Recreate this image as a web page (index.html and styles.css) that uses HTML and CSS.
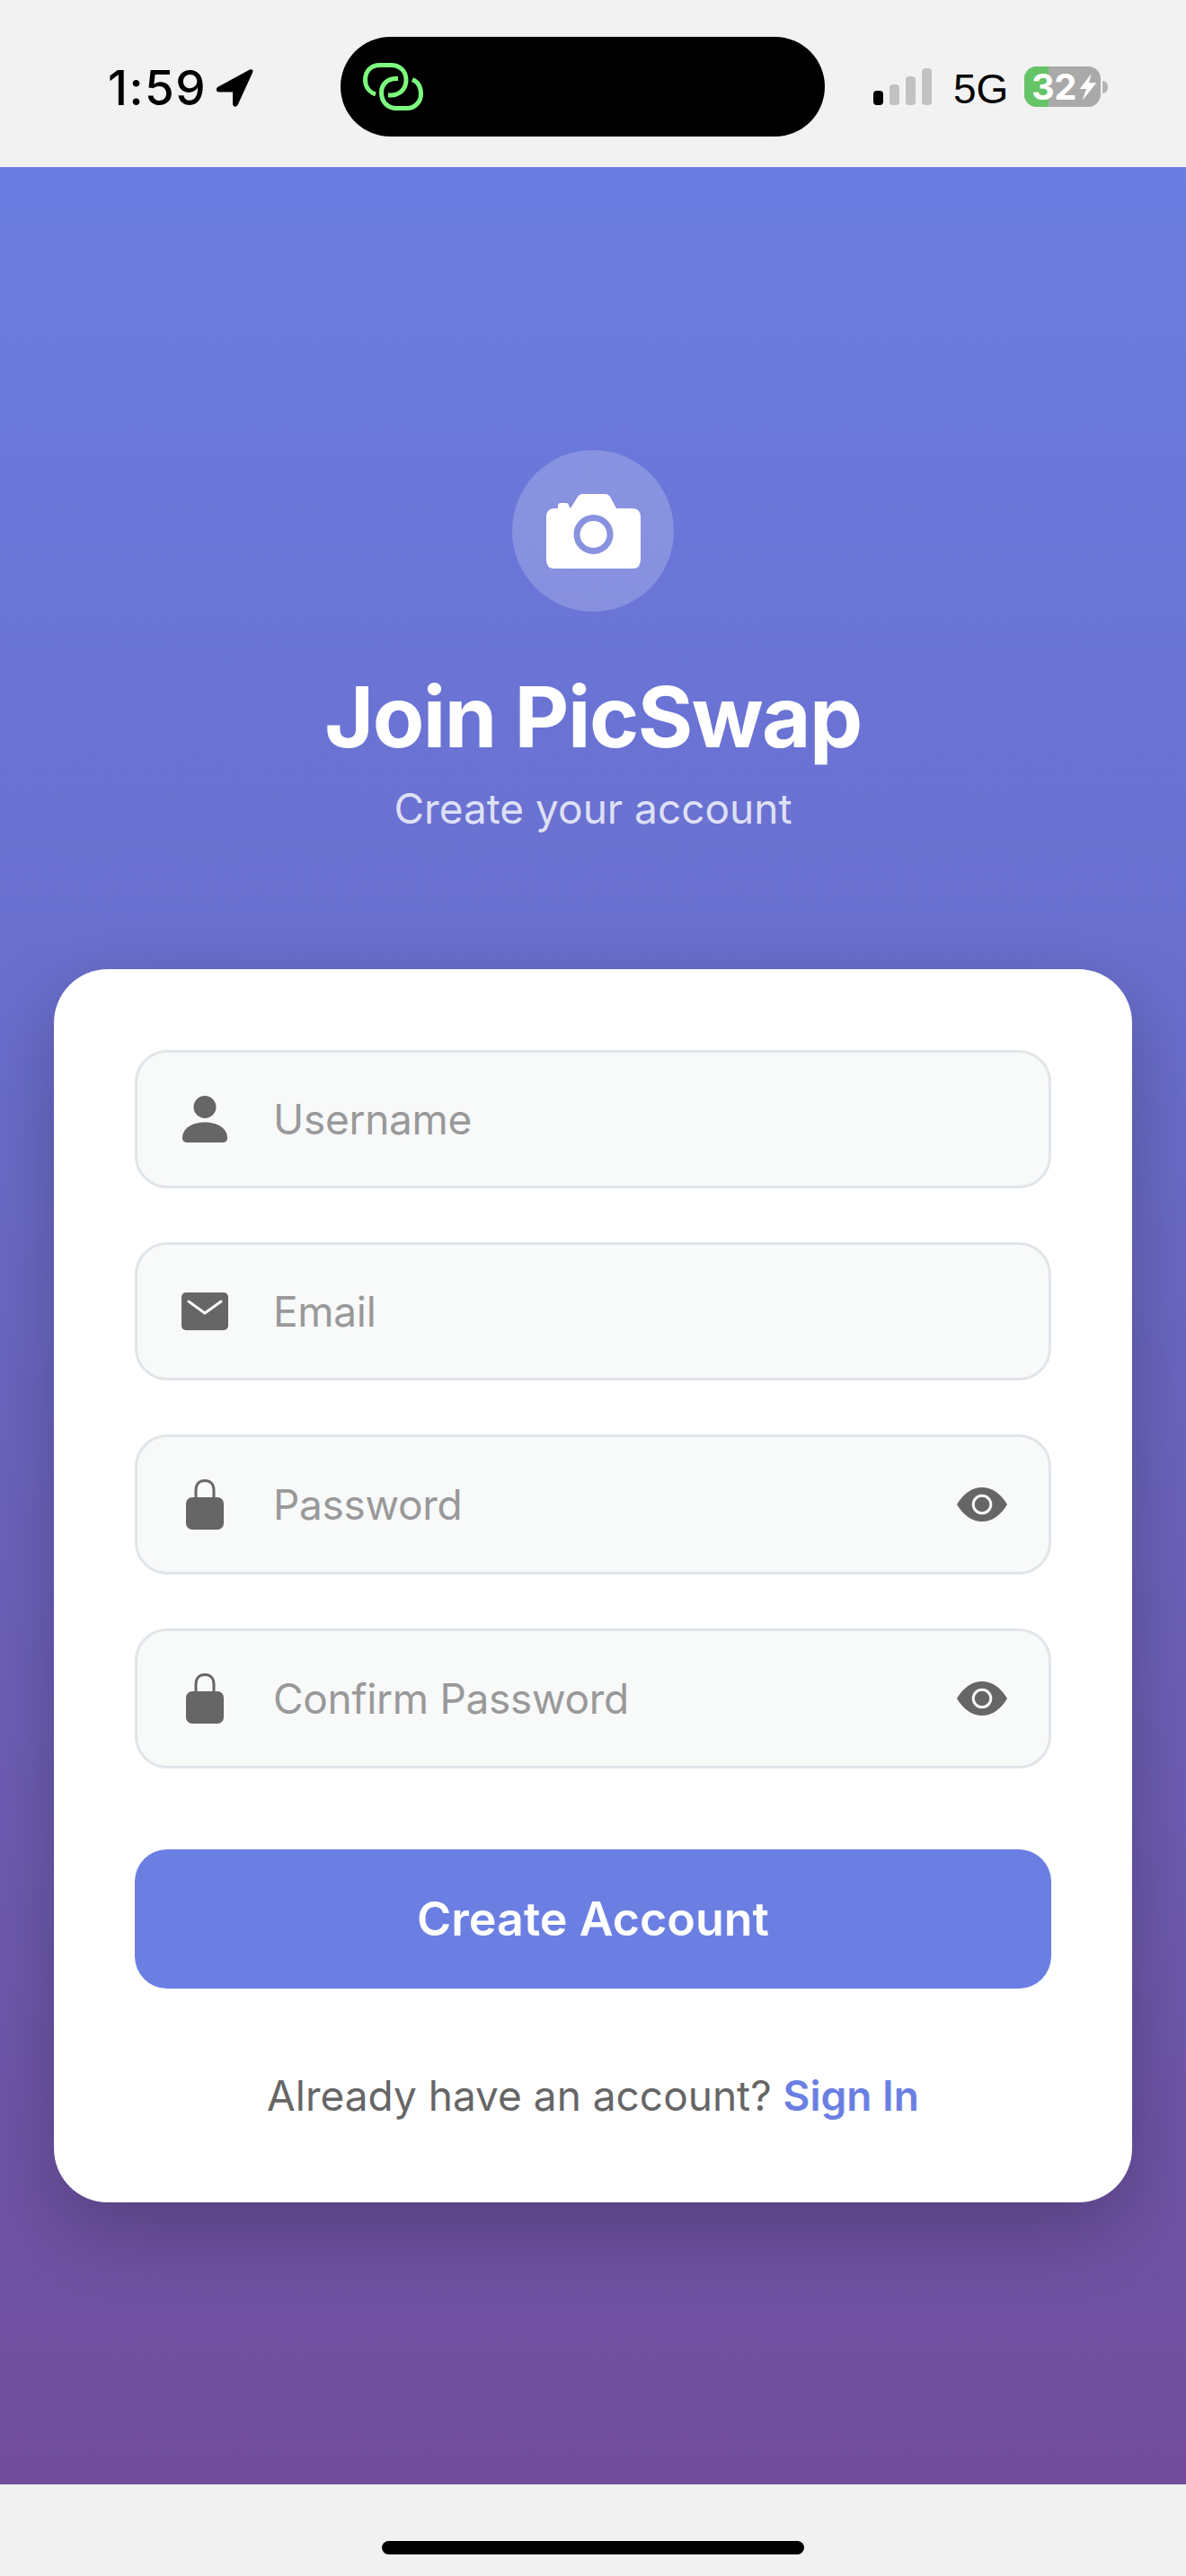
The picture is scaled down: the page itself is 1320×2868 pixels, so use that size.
FILE: index.html
```html
<!DOCTYPE html>
<html lang="en">
<head>
<meta charset="utf-8">
<title>Join PicSwap</title>
<link rel="stylesheet" href="styles.css">
</head>
<body>
<div class="screen">
  <header class="status">
    <div class="status-left">
      <span class="time">1:59</span>
      <svg class="arrow" viewBox="0 0 42 42"><path d="M38 0.6 L3 19.5 C-0.5 21.5 0.4 25.5 4 25.5 L19 25.5 L19 38 C19 42.5 23.5 43 25 39 L41 4 C42.4 1 40.5 -0.6 38 0.6 Z" fill="#000"/></svg>
    </div>
    <div class="island">
      <svg class="link" viewBox="0 0 67 53" fill="none" stroke="#7dfc7e" stroke-width="5">
        <path d="M14 35 C6.5 32.5 2.5 26 2.5 19 C2.5 9 9 2.5 19 2.5 H31 C41 2.5 48 9 48 19 C48 29 41 36 31 36 H28"/>
        <path d="M39 17.5 H37 C27 17.5 20.5 24 20.5 33 C20.5 43 27 50.5 37 50.5 H49 C58 50.5 64.5 43 64.5 35 C64.5 27 61 21 55 18.5"/>
      </svg>
    </div>
    <div class="status-right">
      <div class="signal">
        <i class="bar bar-1"></i><i class="bar bar-2"></i><i class="bar bar-3"></i><i class="bar bar-4"></i>
      </div>
      <span class="network">5G</span>
      <div class="battery">
        <div class="battery-body">
          <i class="battery-fill"></i>
          <span class="battery-text">32</span>
          <svg class="bolt" viewBox="0 0 20 32"><path d="M14 0 L0 18 H8 L3 32 L20 11 H11 Z" fill="#fff"/></svg>
        </div>
        <i class="battery-cap"></i>
      </div>
    </div>
  </header>

  <main class="main">
    <section class="hero">
      <div class="logo">
        <svg class="camera" viewBox="0 0 105 83">
          <path fill-rule="evenodd" fill="#fff" d="M0 26 Q0 16 9 16 H13 V13 Q13 10 16 10 H22 Q25 10 25 13 L27 16 L35 3 Q37 0 40 0 H66 Q69 0 71 3 L78 16 H96 Q105 16 105 26 V73 Q105 83 96 83 H9 Q0 83 0 73 Z M52.5 23 A22 22 0 1 0 52.5 67 A22 22 0 1 0 52.5 23 Z"/>
          <circle cx="52.5" cy="45" r="15" fill="#fff"/>
        </svg>
      </div>
      <h1 class="title">Join PicSwap</h1>
      <p class="subtitle">Create your account</p>
    </section>

    <section class="card">
      <div class="field">
        <span class="field-icon">
          <svg class="ico-user" viewBox="0 0 50 52"><circle cx="25" cy="12.5" r="12.5" fill="#666"/><path d="M0 47 C0 36 11 29.500 25 29.500 C39 29.500 50 36 50 47 C50 50 48 52 45 52 H5 C2 52 0 50 0 47 Z" fill="#666"/></svg>
        </span>
        <span class="placeholder">Username</span>
      </div>
      <div class="field">
        <span class="field-icon">
          <svg class="ico-mail" viewBox="0 0 52 42"><rect width="52" height="42" rx="5" fill="#666"/><path d="M8 10 L26 23 L44 10" fill="none" stroke="#f8f9f9" stroke-width="3" stroke-linecap="round" stroke-linejoin="round"/></svg>
        </span>
        <span class="placeholder">Email</span>
      </div>
      <div class="field field-tall">
        <span class="field-icon">
          <svg class="ico-lock" viewBox="0 0 42 56"><path d="M11 22 V12 C11 5.500 15 1.500 21 1.500 C27 1.500 31 5.500 31 12 V22" fill="none" stroke="#666" stroke-width="3"/><rect y="20" width="42" height="36" rx="7" fill="#666"/></svg>
        </span>
        <span class="placeholder">Password</span>
        <svg class="ico-eye" viewBox="0 0 56 38"><path d="M0 19 C7 7 17 0 28 0 C39 0 49 7 56 19 C49 31 39 38 28 38 C17 38 7 31 0 19 Z" fill="#666"/><circle cx="28" cy="19" r="9.800" fill="#666" stroke="#f8f9f9" stroke-width="3"/></svg>
      </div>
      <div class="field field-tall">
        <span class="field-icon">
          <svg class="ico-lock" viewBox="0 0 42 56"><path d="M11 22 V12 C11 5.500 15 1.500 21 1.500 C27 1.500 31 5.500 31 12 V22" fill="none" stroke="#666" stroke-width="3"/><rect y="20" width="42" height="36" rx="7" fill="#666"/></svg>
        </span>
        <span class="placeholder">Confirm Password</span>
        <svg class="ico-eye" viewBox="0 0 56 38"><path d="M0 19 C7 7 17 0 28 0 C39 0 49 7 56 19 C49 31 39 38 28 38 C17 38 7 31 0 19 Z" fill="#666"/><circle cx="28" cy="19" r="9.800" fill="#666" stroke="#f8f9f9" stroke-width="3"/></svg>
      </div>
      <button class="submit" type="button">Create Account</button>
      <p class="switch">Already have an account? <a class="switch-link">Sign In</a></p>
    </section>
  </main>

  <footer class="home">
    <i class="home-bar"></i>
  </footer>
</div>
</body>
</html>
```

FILE: styles.css
```css
* { box-sizing: border-box; }
html, body { margin: 0; padding: 0; }
body {
  width: 1320px;
  height: 2868px;
  overflow: hidden;
  background: #f2f2f2;
  font-family: Inter, "Liberation Sans", sans-serif;
}
.screen { display: flex; flex-direction: column; height: 2868px; }

/* status bar */
.status {
  height: 186px;
  flex: none;
  display: flex;
  align-items: flex-start;
  background: #f2f2f2;
}
.status-left {
  width: 379px;
  height: 186px;
  padding-left: 120px;
  display: flex;
  align-items: center;
  gap: 10px;
  flex: none;
}
.time {
  font-size: 53px;
  font-weight: 500;
  line-height: 60px;
  color: #000;
  letter-spacing: 1.5px;
  margin-top: 10px;
}
.arrow { width: 42px; height: 42px; margin-top: 10px; }
.island {
  width: 539px;
  height: 111px;
  margin-top: 41px;
  background: #000;
  border-radius: 56px;
  padding: 29px 0 0 25px;
  flex: none;
}
.link { display: block; width: 67px; height: 53px; }
.status-right {
  display: flex;
  align-items: flex-start;
  padding-left: 54px;
}
.signal {
  width: 65px;
  height: 41px;
  margin-top: 76px;
  display: flex;
  align-items: flex-end;
  gap: 7px;
}
.bar { display: block; width: 11px; background: #c2c2c2; border-radius: 4px; }
.bar-1 { height: 16px; background: #000; }
.bar-2 { height: 23px; }
.bar-3 { height: 32px; }
.bar-4 { height: 41px; }
.network {
  margin: 73px 0 0 24px;
  width: 79px;
  font-family: "Liberation Sans", sans-serif;
  font-size: 46px;
  line-height: 52px;
  color: #000;
}
.battery { display: flex; align-items: center; margin-top: 74px; gap: 2px; }
.battery-body {
  position: relative;
  width: 85px;
  height: 45px;
  background: #a9a9a9;
  border-radius: 14px;
  display: flex;
  align-items: center;
  padding-left: 8px;
}
.battery-fill {
  position: absolute;
  left: 0;
  top: 0;
  bottom: 0;
  width: 27px;
  background: #65c466;
  border-radius: 14px 0 0 14px;
}
.battery-text {
  position: relative;
  font-size: 40px;
  font-weight: 700;
  line-height: 45px;
  color: #fff;
  letter-spacing: -0.5px;
}
.bolt { position: relative; width: 20px; height: 30px; margin-left: 3px; }
.battery-cap {
  display: block;
  width: 6px;
  height: 14px;
  background: #b5b5b5;
  border-radius: 0 6px 6px 0;
}

/* main */
.main {
  flex: 1;
  padding: 315px 60px 0;
  background: linear-gradient(180deg, #6b7de1 0%, #6a6dcb 40%, #714d9c 100%);
}
.hero { display: flex; flex-direction: column; align-items: center; }
.logo {
  width: 180px;
  height: 180px;
  border-radius: 50%;
  background: rgba(255, 255, 255, 0.2);
  display: flex;
  align-items: center;
  justify-content: center;
}
.camera { display: block; width: 105px; height: 83px; }
.title {
  margin: 60px 0 0;
  font-size: 94px;
  font-weight: 700;
  line-height: 114px;
  color: #fff;
  letter-spacing: -1.5px;
}
.subtitle {
  margin: 17px 0 0;
  font-size: 46px;
  font-weight: 400;
  line-height: 56px;
  color: rgba(255, 255, 255, 0.8);
}
.card {
  margin-top: 151px;
  height: 1373px;
  padding: 90px;
  background: #fff;
  border-radius: 60px;
  box-shadow: 0 30px 90px rgba(0, 0, 0, 0.25);
  display: flex;
  flex-direction: column;
}
.field {
  height: 154px;
  flex: none;
  margin-bottom: 60px;
  padding: 0 46px 0 48px;
  display: flex;
  align-items: center;
  background: #f8f9f9;
  border: 3px solid #e1e5e9;
  border-radius: 36px;
}
.field-tall { height: 156px; }
.field-icon {
  width: 60px;
  display: flex;
  justify-content: center;
  margin: 0 46px 0 -3px;
  flex: none;
}
.ico-user { display: block; width: 50px; height: 52px; }
.ico-mail { display: block; width: 52px; height: 42px; }
.ico-lock { display: block; width: 42px; height: 56px; }
.ico-eye { display: block; width: 56px; height: 38px; margin-left: auto; }
.placeholder { font-size: 46px; line-height: 58px; color: #999; letter-spacing: -0.3px; }
.submit {
  margin-top: 30px;
  height: 155px;
  flex: none;
  border: 0;
  border-radius: 36px;
  background: #6b7fe3;
  color: #fff;
  font-family: inherit;
  font-size: 52px;
  font-weight: 600;
}
.switch {
  margin: 90px 0 0;
  text-align: center;
  font-size: 46px;
  line-height: 58px;
  color: #666;
}
.switch-link { color: #6b7fe3; font-weight: 600; }

/* home indicator */
.home {
  height: 102px;
  flex: none;
  background: #f1f1f1;
  display: flex;
  justify-content: center;
  padding-top: 63px;
}
.home-bar { display: block; width: 470px; height: 15px; background: #000; border-radius: 8px; }
```
